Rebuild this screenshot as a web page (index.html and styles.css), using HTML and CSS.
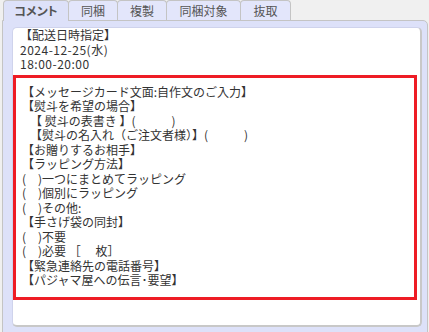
FILE: index.html
```html
<!DOCTYPE html>
<html lang="ja">
<head>
<meta charset="utf-8">
<link rel="stylesheet" href="styles.css">
</head>
<body>
<div class="wrap">
  <div class="tabs">
    <div class="tab active t1">コメント</div>
    <div class="tab t2">同梱</div>
    <div class="tab t2">複製</div>
    <div class="tab t4">同梱対象</div>
    <div class="tab t5">抜取</div>
  </div>
  <div class="panel">
    <div class="sheet">
      <div class="head">
        <div class="ln">【配送日時指定】</div>
        <div class="ln num">2024-12-25(水)</div>
        <div class="ln num">18:00-20:00</div>
      </div>
      <div class="note">
        <div class="ln">【メッセージカード文面:自作文のご入力】</div>
        <div class="ln">【熨斗を希望の場合】</div>
        <div class="ln indent">【 熨斗の表書き 】(　　　)</div>
        <div class="ln indent">【熨斗の名入れ（ご注文者様）】(　　　)</div>
        <div class="ln">【お贈りするお相手】</div>
        <div class="ln">【ラッピング方法】</div>
        <div class="ln">(　)一つにまとめてラッピング</div>
        <div class="ln">(　)個別にラッピング</div>
        <div class="ln">(　)その他:</div>
        <div class="ln">【手さげ袋の同封】</div>
        <div class="ln">(　)不要</div>
        <div class="ln">(　)必要 ［ 　枚］</div>
        <div class="ln">【緊急連絡先の電話番号】</div>
        <div class="ln">【パジャマ屋への伝言･要望】</div>
      </div>
    </div>
  </div>
</div>
</body>
</html>
```

FILE: styles.css
```css
html, body {
  margin: 0;
  padding: 0;
}
body {
  background: #f0f0f0;
  font-family: "Noto Sans CJK JP", "Noto Sans", sans-serif;
  font-size: 12px;
  color: #333;
}
.wrap {
  width: 429px;
  height: 332px;
  overflow: hidden;
  padding-left: 2px;
  box-sizing: border-box;
}
.tabs {
  display: flex;
  height: 20px;
  padding-left: 1px;
  position: relative;
  z-index: 1;
}
.tab {
  box-sizing: border-box;
  height: 20px;
  border: 1px solid #c4c4c4;
  border-bottom: none;
  border-radius: 4px 4px 0 0;
  background: #e3e6fb;
  color: #555;
  line-height: 19px;
  text-align: center;
  white-space: nowrap;
}
.tab + .tab {
  margin-left: -1px;
}
.t1 { width: 66px; }
.t2 { width: 50px; }
.t4 { width: 75px; }
.t5 { width: 51px; }
.tab.active {
  height: 21px;
  background: #dde1f9;
  font-weight: bold;
  font-feature-settings: "palt";
}
.panel {
  box-sizing: border-box;
  height: 320px;
  margin-right: 1px;
  background: #dde1f9;
  border: 1px solid #c4c4c4;
  border-radius: 0 5px 0 0;
  padding: 6px 5px 0 9px;
}
.sheet {
  box-sizing: border-box;
  height: 300px;
  background: #fff;
  border-top: 1px solid #cfd3ec;
  border-left: 1px solid #cfd3ec;
  border-right: 2px solid #c8c8c8;
  border-bottom: 2px solid #c8c8c8;
  border-radius: 5px;
}
.ln {
  line-height: 14.5px;
  height: 14.5px;
  white-space: nowrap;
}
.num {
  letter-spacing: 0.5px;
}
.head {
  padding-left: 7px;
}
.note {
  margin: 3px 3px 0 0;
  border: 3px solid #ee1c25;
  padding: 7px 0 9px 6px;
}
.indent {
  padding-left: 8px;
}
```
